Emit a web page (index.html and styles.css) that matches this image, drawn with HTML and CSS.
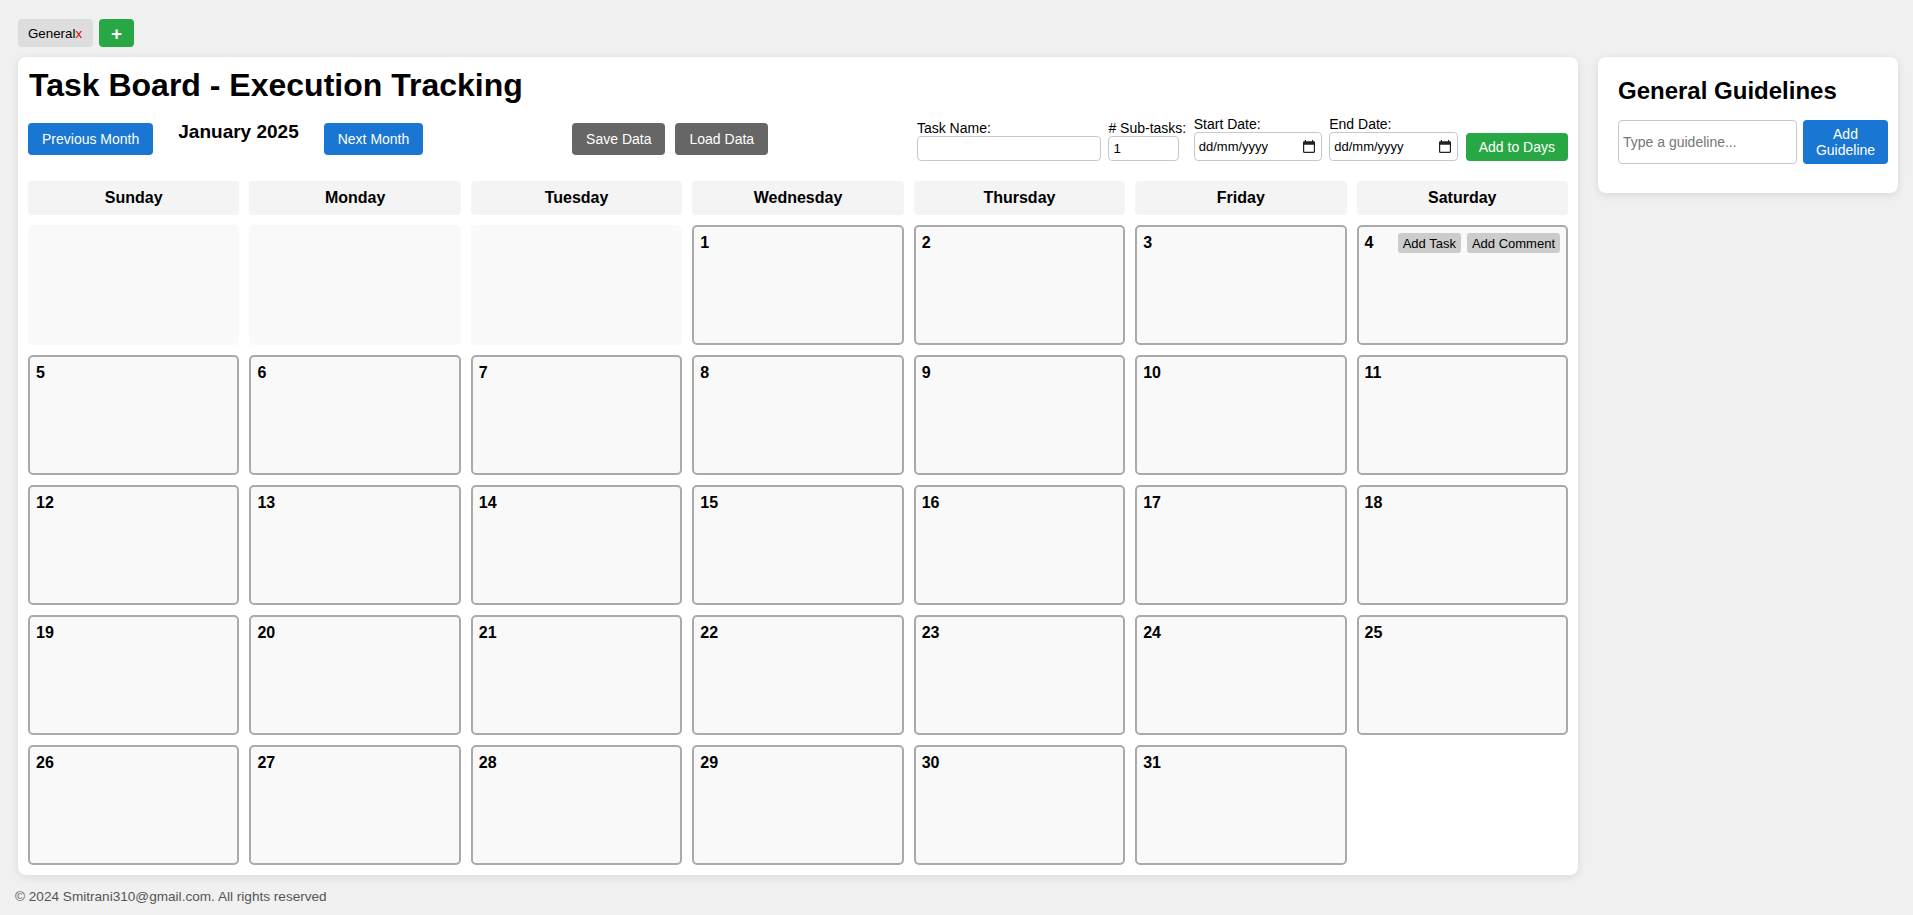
FILE: index.html
```html
<!DOCTYPE html>
<html lang="en">
<head>
<meta charset="utf-8">
<title>Task Board - Execution Tracking</title>
<link rel="stylesheet" href="styles.css">
</head>
<body>
<div class="tabs">
  <button class="tab">General<span class="tab-close">x</span></button>
  <button class="tab-add">+</button>
</div>
<div class="layout">
  <main class="board">
    <h1 class="board-title">Task Board - Execution Tracking</h1>
    <div class="controls">
      <div class="month-nav">
        <button class="btn btn-blue">Previous Month</button>
        <h2 class="month-label">January 2025</h2>
        <button class="btn btn-blue">Next Month</button>
      </div>
      <div class="data-btns">
        <button class="btn btn-gray">Save Data</button>
        <button class="btn btn-gray">Load Data</button>
      </div>
      <div class="task-form">
        <div class="field">
          <label class="field-label">Task Name:</label>
          <input class="text-input task-name" type="text">
        </div>
        <div class="field">
          <label class="field-label"># Sub-tasks:</label>
          <input class="text-input sub-tasks" type="number" value="1">
        </div>
        <div class="field">
          <label class="field-label">Start Date:</label>
          <div class="date-input"><span>dd/mm/yyyy</span><svg class="cal-icon" width="12" height="13" viewBox="2 1 20 22" preserveAspectRatio="none"><path d="M20 3h-1V1h-2v2H7V1H5v2H4c-1.1 0-2 .9-2 2v16c0 1.1.9 2 2 2h16c1.1 0 2-.9 2-2V5c0-1.1-.9-2-2-2zm0 18H4V9h16v12z" fill="#222"/></svg></div>
        </div>
        <div class="field">
          <label class="field-label">End Date:</label>
          <div class="date-input end"><span>dd/mm/yyyy</span><svg class="cal-icon" width="12" height="13" viewBox="2 1 20 22" preserveAspectRatio="none"><path d="M20 3h-1V1h-2v2H7V1H5v2H4c-1.1 0-2 .9-2 2v16c0 1.1.9 2 2 2h16c1.1 0 2-.9 2-2V5c0-1.1-.9-2-2-2zm0 18H4V9h16v12z" fill="#222"/></svg></div>
        </div>
        <button class="btn btn-green add-days">Add to Days</button>
      </div>
    </div>
    <div class="calendar">
      <div class="day-head">Sunday</div>
      <div class="day-head">Monday</div>
      <div class="day-head">Tuesday</div>
      <div class="day-head">Wednesday</div>
      <div class="day-head">Thursday</div>
      <div class="day-head">Friday</div>
      <div class="day-head">Saturday</div>
      <div class="cell empty"></div>
      <div class="cell empty"></div>
      <div class="cell empty"></div>
      <div class="cell"><div class="cell-top"><span class="day-num">1</span></div></div>
      <div class="cell"><div class="cell-top"><span class="day-num">2</span></div></div>
      <div class="cell"><div class="cell-top"><span class="day-num">3</span></div></div>
      <div class="cell"><div class="cell-top"><span class="day-num">4</span><span class="cell-actions"><button class="mini-btn">Add Task</button><button class="mini-btn">Add Comment</button></span></div></div>
      <div class="cell"><div class="cell-top"><span class="day-num">5</span></div></div>
      <div class="cell"><div class="cell-top"><span class="day-num">6</span></div></div>
      <div class="cell"><div class="cell-top"><span class="day-num">7</span></div></div>
      <div class="cell"><div class="cell-top"><span class="day-num">8</span></div></div>
      <div class="cell"><div class="cell-top"><span class="day-num">9</span></div></div>
      <div class="cell"><div class="cell-top"><span class="day-num">10</span></div></div>
      <div class="cell"><div class="cell-top"><span class="day-num">11</span></div></div>
      <div class="cell"><div class="cell-top"><span class="day-num">12</span></div></div>
      <div class="cell"><div class="cell-top"><span class="day-num">13</span></div></div>
      <div class="cell"><div class="cell-top"><span class="day-num">14</span></div></div>
      <div class="cell"><div class="cell-top"><span class="day-num">15</span></div></div>
      <div class="cell"><div class="cell-top"><span class="day-num">16</span></div></div>
      <div class="cell"><div class="cell-top"><span class="day-num">17</span></div></div>
      <div class="cell"><div class="cell-top"><span class="day-num">18</span></div></div>
      <div class="cell"><div class="cell-top"><span class="day-num">19</span></div></div>
      <div class="cell"><div class="cell-top"><span class="day-num">20</span></div></div>
      <div class="cell"><div class="cell-top"><span class="day-num">21</span></div></div>
      <div class="cell"><div class="cell-top"><span class="day-num">22</span></div></div>
      <div class="cell"><div class="cell-top"><span class="day-num">23</span></div></div>
      <div class="cell"><div class="cell-top"><span class="day-num">24</span></div></div>
      <div class="cell"><div class="cell-top"><span class="day-num">25</span></div></div>
      <div class="cell"><div class="cell-top"><span class="day-num">26</span></div></div>
      <div class="cell"><div class="cell-top"><span class="day-num">27</span></div></div>
      <div class="cell"><div class="cell-top"><span class="day-num">28</span></div></div>
      <div class="cell"><div class="cell-top"><span class="day-num">29</span></div></div>
      <div class="cell"><div class="cell-top"><span class="day-num">30</span></div></div>
      <div class="cell"><div class="cell-top"><span class="day-num">31</span></div></div>
    </div>
  </main>
  <aside class="guidelines">
    <h2 class="guide-title">General Guidelines</h2>
    <div class="guide-row">
      <input class="guide-input" type="text" placeholder="Type a guideline...">
      <button class="btn btn-blue guide-btn">Add Guideline</button>
    </div>
  </aside>
</div>
<footer class="footer">© 2024 Smitrani310@gmail.com. All rights reserved</footer>
</body>
</html>
```

FILE: styles.css
```css
* { box-sizing: border-box; }

body {
  margin: 0;
  background: #f0f0f0;
  font-family: "Liberation Sans", Arial, sans-serif;
  color: #000;
}

.tabs {
  display: flex;
  gap: 6px;
  margin: 19px 0 10px 18px;
}

.tab {
  height: 28px;
  padding: 0 11px 0 10px;
  border: none;
  border-radius: 4px;
  background: #dddddd;
  font-family: "Liberation Sans", Arial, sans-serif;
  font-size: 13.33px;
  color: #000;
}

.tab-close { color: #e00000; }

.tab-add {
  width: 35px;
  height: 28px;
  border: none;
  border-radius: 4px;
  background: #28a745;
  color: #fff;
  font-family: "Liberation Sans", Arial, sans-serif;
  font-size: 19px;
  font-weight: bold;
  line-height: 1;
  padding: 0;
}

.layout {
  display: flex;
  align-items: flex-start;
  gap: 20px;
  padding: 0 15px 0 18px;
}

.board {
  flex: 1;
  background: #fff;
  border-radius: 8px;
  box-shadow: 0 2px 8px rgba(0,0,0,0.1);
  padding: 10px;
}

.board-title {
  margin: 0 0 12px 1px;
  font-size: 32px;
  font-weight: bold;
  line-height: 37px;
}

.controls {
  display: flex;
  justify-content: space-between;
  align-items: center;
  margin-bottom: 20px;
}

.month-nav {
  display: flex;
  align-items: flex-start;
  gap: 25px;
}

.month-label {
  margin: -2px 0 0 0;
  font-size: 19px;
  font-weight: bold;
  line-height: 22px;
}

.data-btns {
  display: flex;
  gap: 10px;
}

.btn {
  border: none;
  border-radius: 4px;
  color: #fff;
  font-family: "Liberation Sans", Arial, sans-serif;
  font-size: 14px;
  line-height: 16px;
  padding: 8px 14px;
}

.btn-blue { background: #1976d2; }
.btn-gray { background: #666666; }
.btn-green { background: #28a745; }

.task-form {
  display: flex;
  align-items: flex-end;
  gap: 7.5px;
}

.field {
  display: flex;
  flex-direction: column;
  align-items: flex-start;
}

.field-label {
  font-size: 14px;
  line-height: 16px;
}

.text-input {
  height: 25px;
  border: 1px solid #c8c8c8;
  border-radius: 4px;
  padding: 2px 4px;
  font-family: "Liberation Sans", Arial, sans-serif;
  font-size: 13.33px;
  color: #000;
  background: #fff;
}

.task-name { width: 184px; }
.sub-tasks { width: 71px; }

.date-input {
  width: 128px;
  height: 29px;
  border: 1px solid #c8c8c8;
  border-radius: 4px;
  padding: 0 6px 0 4px;
  display: flex;
  align-items: center;
  justify-content: space-between;
  font-size: 13px;
  color: #000;
  background: #fff;
}

.date-input.end { width: 129px; }

.cal-icon { display: block; }

.add-days {
  height: 28px;
  padding: 0 13px;
}

.calendar {
  display: grid;
  grid-template-columns: repeat(7, 1fr);
  grid-template-rows: 34px;
  grid-auto-rows: 120px;
  gap: 10px;
}

.day-head {
  background: #f4f4f4;
  border-radius: 4px;
  text-align: center;
  font-weight: bold;
  font-size: 16px;
  line-height: 18px;
  padding: 8px 0;
}

.cell {
  background: #f9f9f9;
  border: 2px solid #aaaaaa;
  border-radius: 5px;
  padding: 6px;
}

.cell.empty {
  border-color: transparent;
}

.cell-top {
  display: flex;
  align-items: center;
  justify-content: space-between;
  min-height: 20px;
}

.day-num {
  font-weight: bold;
  font-size: 16px;
  line-height: 18px;
}

.cell-actions {
  display: flex;
  gap: 6px;
}

.mini-btn {
  height: 20px;
  border: none;
  border-radius: 3px;
  background: #cccccc;
  color: #000;
  font-family: "Liberation Sans", Arial, sans-serif;
  font-size: 13px;
  padding: 0 5px;
}

.guidelines {
  width: 300px;
  background: #fff;
  border-radius: 8px;
  box-shadow: 0 2px 8px rgba(0,0,0,0.1);
  padding: 20px 10px 29px 20px;
}

.guide-title {
  margin: 0 0 15px 0;
  font-size: 24px;
  font-weight: bold;
  line-height: 28px;
}

.guide-row {
  display: flex;
  gap: 6px;
}

.guide-input {
  width: 179px;
  height: 44px;
  border: 1px solid #c8c8c8;
  border-radius: 4px;
  padding: 4px;
  font-family: "Liberation Sans", Arial, sans-serif;
  font-size: 14px;
}

.guide-input::placeholder { color: #767676; }

.guide-btn {
  width: 85px;
  height: 44px;
  padding: 6px 10px;
}

.footer {
  margin: 14px 0 0 15px;
  font-size: 13.6px;
  color: #555;
}
```
